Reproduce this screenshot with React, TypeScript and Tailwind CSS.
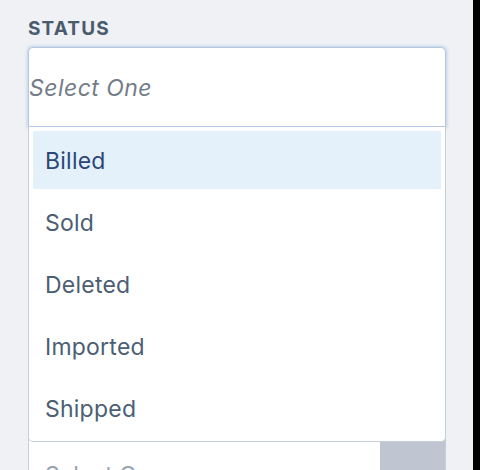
import React from "react";

const options = ["Billed", "Sold", "Deleted", "Imported", "Shipped"];

const App = () => {
  return (
    <div
      className="flex h-[470px] w-[480px] overflow-hidden bg-[#eff1f5]"
      style={{ fontFamily: "Inter, 'Noto Sans', sans-serif" }}
    >
      <div className="w-[473px] pl-[28px] pr-[27px] pt-[19px]">
        {/* Status field */}
        <label className="block h-[19px] text-[19px] font-bold uppercase leading-none tracking-[0.06em] text-[#4a5b6e]">
          Status
        </label>

        <div className="relative mt-[9px]">
          <div className="flex h-[80px] items-center rounded-t-[5px] border border-[#b5c9e3] bg-white pt-[3px] shadow-[0_0_3px_1px_rgba(140,180,225,0.5)]">
            <span className="text-[23px] italic leading-none tracking-[0.02em] text-[#747c8a]">
              Select One
            </span>
          </div>

          {/* Dropdown menu */}
          <ul className="absolute left-0 right-0 top-full z-10 flex flex-col gap-[4px] rounded-b-[5px] border border-t-0 border-[#c6cfd9] bg-white px-[4px] py-[4px]">
            {options.map((opt, i) => (
              <li
                key={opt}
                className={`flex h-[58px] items-center px-[12px] pt-[3px] text-[23px] leading-none tracking-[0.01em] ${
                  i === 0
                    ? "bg-[#e4f1fb] text-[#2b4778]"
                    : "text-[#4b5e73]"
                }`}
              >
                {opt}
              </li>
            ))}
          </ul>
        </div>

        {/* Next field, mostly covered by the menu */}
        <div className="mt-[305px] flex h-[80px] overflow-hidden rounded-[5px] border border-[#c6cfd9] bg-white">
          <div className="flex flex-1 items-center px-[16px] pt-[6px] text-[23px] leading-none text-[#9aa3b0]">
            Select One
          </div>
          <div className="w-[65px] bg-[#bfc6d1]" />
        </div>
      </div>
      <div className="w-[7px] bg-black" />
    </div>
  );
};

export default App;
